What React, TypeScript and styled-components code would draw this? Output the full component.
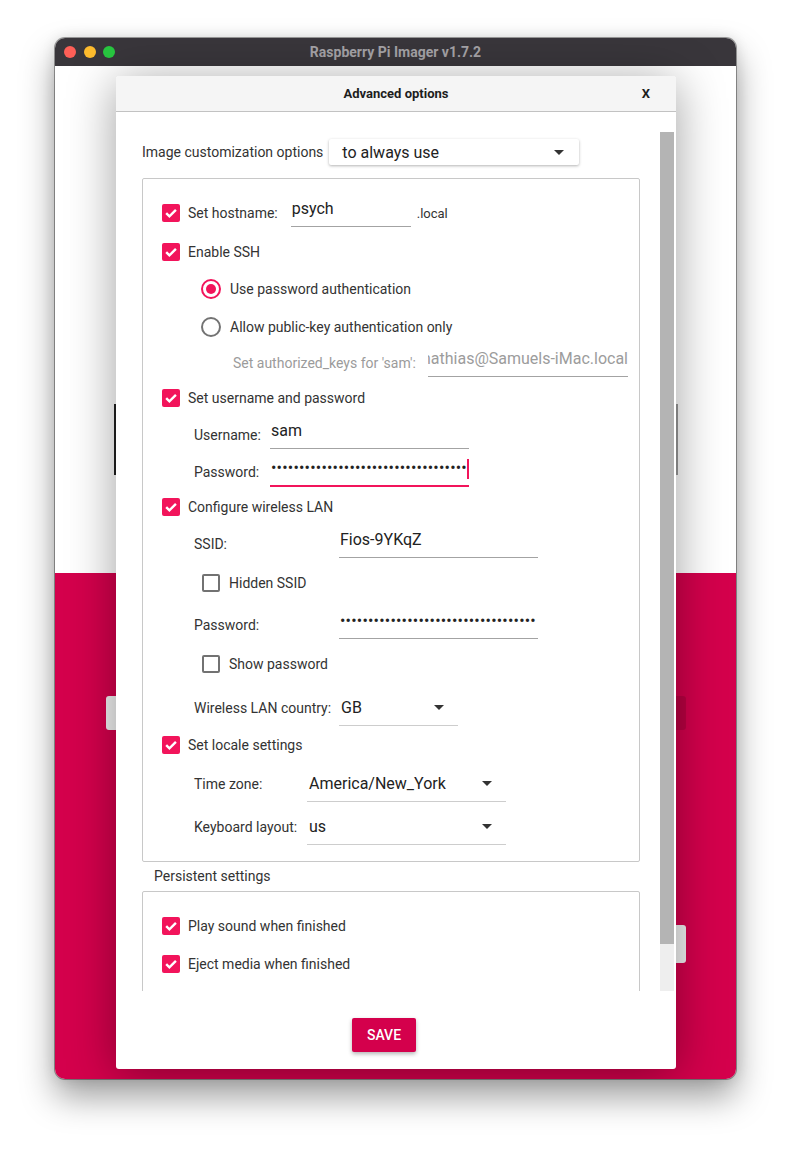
import styled, { createGlobalStyle } from 'styled-components';

const ACCENT = '#f2145b';
const BRAND = '#d4004c';

const GlobalStyle = createGlobalStyle`
  * { box-sizing: border-box; }
  html, body { margin: 0; padding: 0; background: #ffffff; }
  body { font-family: Roboto, "Liberation Sans", sans-serif; color: #333; }
`;

const Page = styled.div`
  width: 792px;
  height: 1153px;
  padding: 38px 0 0 55px;
  overflow: hidden;
`;

const Window = styled.div`
  position: relative;
  width: 681px;
  height: 1041px;
  border-radius: 10px;
  overflow: hidden;
  display: flex;
  flex-direction: column;
  box-shadow: 0 0 0 1px rgba(0, 0, 0, 0.35), 0 18px 34px rgba(0, 0, 0, 0.38), 0 0 14px rgba(0, 0, 0, 0.12);
`;

const TitleBar = styled.div`
  height: 28px;
  flex: none;
  background: #39363b;
  display: grid;
  grid-template-columns: 1fr auto 1fr;
  align-items: center;
  padding: 0 9px;
`;

const Lights = styled.div`
  display: flex;
  gap: 7.5px;
`;

const Light = styled.span<{ $c: string }>`
  width: 12px;
  height: 12px;
  border-radius: 50%;
  background: ${(p) => p.$c};
`;

const WindowTitle = styled.div`
  font-size: 14px;
  font-weight: 700;
  color: #a5a3a7;
`;

const BackTop = styled.div`
  height: 507px;
  flex: none;
  background: #ffffff;
  display: flex;
  justify-content: space-between;
  align-items: flex-start;
  padding: 338px 58px 0 59px;
`;

const BackRule = styled.span<{ $c: string }>`
  width: 2px;
  height: 71px;
  background: ${(p) => p.$c};
`;

const BackBottom = styled.div`
  flex: 1;
  background: ${BRAND};
  display: flex;
  flex-direction: column;
  padding: 123px 50px 0 51px;
`;

const BackRow = styled.div<{ $mt?: number; $end?: boolean }>`
  display: flex;
  justify-content: ${(p) => (p.$end ? 'flex-end' : 'space-between')};
  margin-top: ${(p) => p.$mt ?? 0}px;
`;

const BackButton = styled.div<{ $dim?: boolean; $h: number }>`
  width: 120px;
  height: ${(p) => p.$h}px;
  border-radius: 3px;
  background: ${(p) => (p.$dim ? 'rgba(0, 0, 0, 0.12)' : '#f3f3f3')};
`;

const Dialog = styled.div`
  position: absolute;
  left: 61px;
  top: 38px;
  width: 560px;
  height: 993px;
  background: #ffffff;
  border-radius: 3px;
  overflow: hidden;
  display: flex;
  flex-direction: column;
  box-shadow: 0 6px 48px rgba(0, 0, 0, 0.38);
`;

const DialogHeader = styled.div`
  height: 36px;
  flex: none;
  background: #f5f5f5;
  border-bottom: 1px solid #c2c2c2;
  display: grid;
  grid-template-columns: 1fr auto 1fr;
  align-items: center;
  padding: 0 26px;
`;

const DialogTitle = styled.div`
  grid-column: 2;
  font-size: 13px;
  font-weight: 700;
  color: #1d1d1d;
`;

const CloseMark = styled.div`
  justify-self: end;
  font-size: 13px;
  font-weight: 700;
  color: #1d1d1d;
`;

const DialogBody = styled.div`
  height: 879px;
  flex: none;
  display: flex;
`;

const Scroller = styled.div`
  flex: 1;
  overflow: hidden;
  padding: 27px 20px 0 26px;
`;

const ScrollBar = styled.div`
  width: 14px;
  margin: 20px 2px 0 0;
  display: flex;
  flex-direction: column;
  background: #eeeeee;
`;

const ScrollHandle = styled.div`
  height: 812px;
  background: #b4b4b4;
`;

const Footer = styled.div`
  flex: 1;
  display: flex;
  justify-content: center;
  align-items: flex-start;
  padding: 27px 24px 0 0;
`;

const SaveButton = styled.button`
  width: 64px;
  height: 34px;
  border: none;
  border-radius: 2px;
  background: ${BRAND};
  color: #ffffff;
  font-family: Roboto, "Liberation Sans", sans-serif;
  font-size: 14px;
  font-weight: 500;
  box-shadow: 0 2px 4px rgba(0, 0, 0, 0.3);
`;

const TopRow = styled.div`
  height: 26px;
  display: flex;
  align-items: center;
`;

const Dropdown = styled.div`
  width: 250px;
  height: 26px;
  margin-left: 6px;
  display: flex;
  align-items: center;
  justify-content: space-between;
  padding: 0 15px 0 13px;
  background: #ffffff;
  border-radius: 2px;
  box-shadow: 0 1px 3px rgba(0, 0, 0, 0.3);
  font-size: 16px;
  color: #222;
`;

const GroupBox = styled.div<{ $mt: number; $pb: number }>`
  margin-top: ${(p) => p.$mt}px;
  border: 1px solid #c8c8c8;
  border-radius: 2px;
  padding: 24px 0 ${(p) => p.$pb}px 19px;
`;

const SectionLabel = styled.div`
  margin: 4px 0 5px 12px;
  height: 20px;
  line-height: 20px;
  font-size: 14px;
  color: #333;
`;

const Row = styled.div<{ $mt?: number; $indent?: number }>`
  display: flex;
  align-items: center;
  height: 20px;
  margin-top: ${(p) => p.$mt ?? 0}px;
  padding-left: ${(p) => p.$indent ?? 0}px;
`;

const Text = styled.span<{ $gap?: number; $small?: boolean }>`
  margin-left: ${(p) => p.$gap ?? 0}px;
  font-size: ${(p) => (p.$small ? 13 : 14)}px;
  color: #333;
  white-space: nowrap;
`;

const LabelCell = styled.span<{ $w: number; $muted?: boolean }>`
  width: ${(p) => p.$w}px;
  flex: none;
  font-size: 14px;
  color: ${(p) => (p.$muted ? '#9b9b9b' : '#333')};
  white-space: nowrap;
`;

const Box = styled.span<{ $on: boolean }>`
  width: 18px;
  height: 18px;
  flex: none;
  border-radius: 2px;
  display: inline-flex;
  align-items: center;
  justify-content: center;
  background: ${(p) => (p.$on ? ACCENT : 'transparent')};
  border: ${(p) => (p.$on ? 'none' : '2px solid #727272')};
`;

const RadioDot = styled.span<{ $on: boolean }>`
  width: 20px;
  height: 20px;
  flex: none;
  border-radius: 50%;
  border: 2px solid ${(p) => (p.$on ? ACCENT : '#737373')};
  display: inline-flex;
  align-items: center;
  justify-content: center;
  &::after {
    content: '';
    width: 10px;
    height: 10px;
    border-radius: 50%;
    background: ${(p) => (p.$on ? ACCENT : 'transparent')};
  }
`;

const Field = styled.div<{ $w: number; $gap?: number; $active?: boolean; $muted?: boolean; $end?: boolean }>`
  width: ${(p) => p.$w}px;
  height: ${(p) => (p.$active ? 29 : 28)}px;
  flex: none;
  margin-left: ${(p) => p.$gap ?? 0}px;
  display: flex;
  align-items: flex-start;
  justify-content: ${(p) => (p.$end ? 'flex-end' : 'flex-start')};
  overflow: hidden;
  padding: ${(p) => (p.$end ? '0' : '0 0 0 1px')};
  border-bottom: ${(p) => (p.$active ? `2px solid ${ACCENT}` : '1px solid #a3a3a3')};
  font-size: 16px;
  line-height: 20px;
  color: ${(p) => (p.$muted ? '#9c9c9c' : '#222')};
  white-space: nowrap;
`;

const Dots = styled.span`
  letter-spacing: 0.2px;
`;

const Caret = styled.span`
  width: 2px;
  height: 20px;
  margin-top: 1px;
  flex: none;
  background: ${ACCENT};
`;

const Select = styled.div<{ $w: number }>`
  width: ${(p) => p.$w}px;
  height: 36px;
  flex: none;
  display: flex;
  align-items: center;
  justify-content: space-between;
  padding: 0 14px 0 2px;
  border-bottom: 1px solid #cdcdcd;
  font-size: 16px;
  color: #222;
`;

const Arrow = () => (
  <svg width="10" height="5" viewBox="0 0 10 5">
    <path d="M0 0H10L5 5Z" fill="#333" />
  </svg>
);

const Check = ({ on }: { on: boolean }) => (
  <Box $on={on}>
    {on && (
      <svg width="18" height="18" viewBox="0 0 18 18">
        <path d="M4.2 9.2L7.4 12.4L13.9 5.8" fill="none" stroke="#fff" strokeWidth="2.4" />
      </svg>
    )}
  </Box>
);

const dots = (n: number) => '\u2022'.repeat(n);

export default function App() {
  return (
    <>
      <GlobalStyle />
      <Page>
        <Window>
          <TitleBar>
            <Lights>
              <Light $c="#fe5f57" />
              <Light $c="#febc2e" />
              <Light $c="#28c840" />
            </Lights>
            <WindowTitle>Raspberry Pi Imager v1.7.2</WindowTitle>
          </TitleBar>
          <BackTop>
            <BackRule $c="#222" />
            <BackRule $c="#9a9a9a" />
          </BackTop>
          <BackBottom>
            <BackRow>
              <BackButton $h={34} />
              <BackButton $h={34} $dim />
            </BackRow>
            <BackRow $mt={195} $end>
              <BackButton $h={38} />
            </BackRow>
          </BackBottom>

          <Dialog>
            <DialogHeader>
              <DialogTitle>Advanced options</DialogTitle>
              <CloseMark>X</CloseMark>
            </DialogHeader>
            <DialogBody>
              <Scroller>
                <TopRow>
                  <Text>Image customization options</Text>
                  <Dropdown>
                    <span>to always use</span>
                    <Arrow />
                  </Dropdown>
                </TopRow>

                <GroupBox $mt={13} $pb={24}>
                  <Row>
                    <Check on />
                    <Text $gap={8}>Set hostname:</Text>
                    <Field $w={120} $gap={13}>psych</Field>
                    <Text $gap={6} $small>.local</Text>
                  </Row>
                  <Row $mt={19}>
                    <Check on />
                    <Text $gap={8}>Enable SSH</Text>
                  </Row>
                  <Row $mt={17} $indent={39}>
                    <RadioDot $on />
                    <Text $gap={9}>Use password authentication</Text>
                  </Row>
                  <Row $mt={18} $indent={39}>
                    <RadioDot $on={false} />
                    <Text $gap={9}>Allow public-key authentication only</Text>
                  </Row>
                  <Row $mt={16} $indent={71}>
                    <LabelCell $w={195} $muted>Set authorized_keys for 'sam':</LabelCell>
                    <Field $w={200} $muted $end>
                      <span>mathias@Samuels-iMac.local</span>
                    </Field>
                  </Row>
                  <Row $mt={15}>
                    <Check on />
                    <Text $gap={8}>Set username and password</Text>
                  </Row>
                  <Row $mt={17} $indent={32}>
                    <LabelCell $w={76}>Username:</LabelCell>
                    <Field $w={199}>sam</Field>
                  </Row>
                  <Row $mt={17} $indent={32}>
                    <LabelCell $w={76}>Password:</LabelCell>
                    <Field $w={199} $active>
                      <Dots>{dots(35)}</Dots>
                      <Caret />
                    </Field>
                  </Row>
                  <Row $mt={15}>
                    <Check on />
                    <Text $gap={8}>Configure wireless LAN</Text>
                  </Row>
                  <Row $mt={17} $indent={32}>
                    <LabelCell $w={145}>SSID:</LabelCell>
                    <Field $w={199}>Fios-9YKqZ</Field>
                  </Row>
                  <Row $mt={19} $indent={40}>
                    <Check on={false} />
                    <Text $gap={9}>Hidden SSID</Text>
                  </Row>
                  <Row $mt={22} $indent={32}>
                    <LabelCell $w={145}>Password:</LabelCell>
                    <Field $w={199}>
                      <Dots>{dots(35)}</Dots>
                    </Field>
                  </Row>
                  <Row $mt={19} $indent={40}>
                    <Check on={false} />
                    <Text $gap={9}>Show password</Text>
                  </Row>
                  <Row $mt={24} $indent={32}>
                    <LabelCell $w={145}>Wireless LAN country:</LabelCell>
                    <Select $w={119}>
                      <span>GB</span>
                      <Arrow />
                    </Select>
                  </Row>
                  <Row $mt={17}>
                    <Check on />
                    <Text $gap={8}>Set locale settings</Text>
                  </Row>
                  <Row $mt={19} $indent={32}>
                    <LabelCell $w={113}>Time zone:</LabelCell>
                    <Select $w={199}>
                      <span>America/New_York</span>
                      <Arrow />
                    </Select>
                  </Row>
                  <Row $mt={23} $indent={32}>
                    <LabelCell $w={113}>Keyboard layout:</LabelCell>
                    <Select $w={199}>
                      <span>us</span>
                      <Arrow />
                    </Select>
                  </Row>
                </GroupBox>

                <SectionLabel>Persistent settings</SectionLabel>
                <GroupBox $mt={0} $pb={40}>
                  <Row>
                    <Check on />
                    <Text $gap={8}>Play sound when finished</Text>
                  </Row>
                  <Row $mt={18}>
                    <Check on />
                    <Text $gap={8}>Eject media when finished</Text>
                  </Row>
                </GroupBox>
              </Scroller>
              <ScrollBar>
                <ScrollHandle />
              </ScrollBar>
            </DialogBody>
            <Footer>
              <SaveButton>SAVE</SaveButton>
            </Footer>
          </Dialog>
        </Window>
      </Page>
    </>
  );
}
